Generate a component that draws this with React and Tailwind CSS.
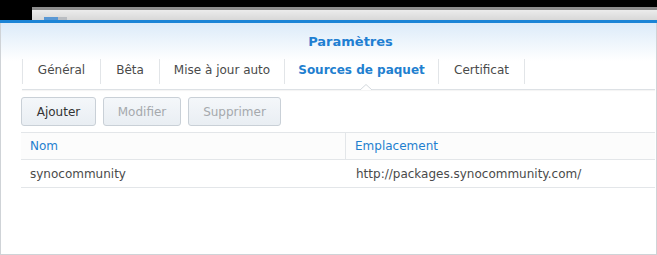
const TABS = [
  { label: 'Général', w: 'w-[78px]' },
  { label: 'Bêta', w: 'w-[59px]' },
  { label: 'Mise à jour auto', w: 'w-[125px]' },
  { label: 'Sources de paquet', w: 'w-[154px]', active: true },
  { label: 'Certificat', w: 'w-[86px]' },
];

function TopBar() {
  return (
    <div className="flex h-[20px] bg-black">
      <div className="w-[32px] shrink-0" />
      <div className="flex flex-1 flex-col pt-[7px]">
        <div className="h-[3px] bg-[#8c8c8c]" />
        <div className="relative flex-1 bg-gradient-to-b from-[#ececec] to-[#d8d8d8]">
          <div className="absolute bottom-0 left-[12px] h-[3px] w-[14px] bg-[#5a98d4]" />
          <div className="absolute bottom-0 left-[26px] h-[3px] w-[9px] bg-[#b9bdc2]" />
        </div>
      </div>
    </div>
  );
}

function Sep() {
  return <div className="mt-[4px] h-[25px] w-px shrink-0 bg-[#e2e5e8]" />;
}

function Tabs() {
  return (
    <div className="ml-[21px] mr-[1px] flex h-[35px] border-b border-[#dde1e5] shadow-[0_1px_1px_rgba(0,0,0,0.04)]">
      {TABS.map((t) => (
        <div key={t.label} className={`flex shrink-0 ${t.w}`}>
          <Sep />
          <div
            className={`relative flex flex-1 items-center justify-center ${
              t.active ? 'font-bold text-[#1f80cf]' : 'text-[#4a4a4a]'
            }`}
          >
            <span className="-mt-[4px]">{t.label}</span>
            {t.active && (
              <svg className="absolute bottom-[-1px] left-1/2 -ml-[2px]" width="12" height="6" viewBox="0 0 12 6">
                <path d="M0 6 L6 0.5 L12 6" fill="#fff" stroke="#d3d8dd" strokeWidth="1" />
              </svg>
            )}
          </div>
        </div>
      ))}
      <Sep />
    </div>
  );
}

function Btn({ children, disabled, w }) {
  return (
    <button
      className={`h-[29px] ${w} rounded-[3px] border border-[#c9d0d7] bg-gradient-to-b from-[#f4f7fa] to-[#e9eef3] ${
        disabled ? 'text-[#a5a9ad]' : 'text-[#333]'
      }`}
    >
      {children}
    </button>
  );
}

export default function App() {
  return (
    <div className="h-[255px] w-[657px] overflow-hidden bg-white text-[12px] font-['DejaVu_Sans',Verdana,sans-serif]">
      <TopBar />
      <div className="h-[3px] bg-[#1b84d6]" />
      <div className="h-[232px] border-x border-b border-[#cfd3d7] bg-gradient-to-b from-[#dcebf9] via-white via-[38px] to-white">
        <div className="flex h-[32px] items-center justify-center pl-[44px] pt-[6px] text-[13px] font-bold text-[#1f7fd2]">
          Paramètres
        </div>
        <Tabs />
        <div className="ml-[20px] mt-[7px] flex gap-[7px]">
          <Btn w="w-[75px]">Ajouter</Btn>
          <Btn w="w-[78px]" disabled>
            Modifier
          </Btn>
          <Btn w="w-[93px]" disabled>
            Supprimer
          </Btn>
        </div>
        <div className="ml-[20px] mr-[1px] mt-[6px] border-t border-[#e3e6e9]">
          <div className="flex h-[27px] border-b border-[#e3e6e9] bg-[#fcfcfc] text-[#1f80cf]">
            <div className="flex w-[325px] items-center border-r border-[#e3e6e9] pl-[9px]">Nom</div>
            <div className="flex flex-1 items-center pl-[9px]">Emplacement</div>
          </div>
          <div className="flex h-[28px] border-b border-[#e3e6e9] text-[#4a4a4a]">
            <div className="flex w-[325px] items-center pl-[9px]">synocommunity</div>
            <div className="flex flex-1 items-center pl-[10px]">http://packages.synocommunity.com/</div>
          </div>
        </div>
      </div>
    </div>
  );
}
